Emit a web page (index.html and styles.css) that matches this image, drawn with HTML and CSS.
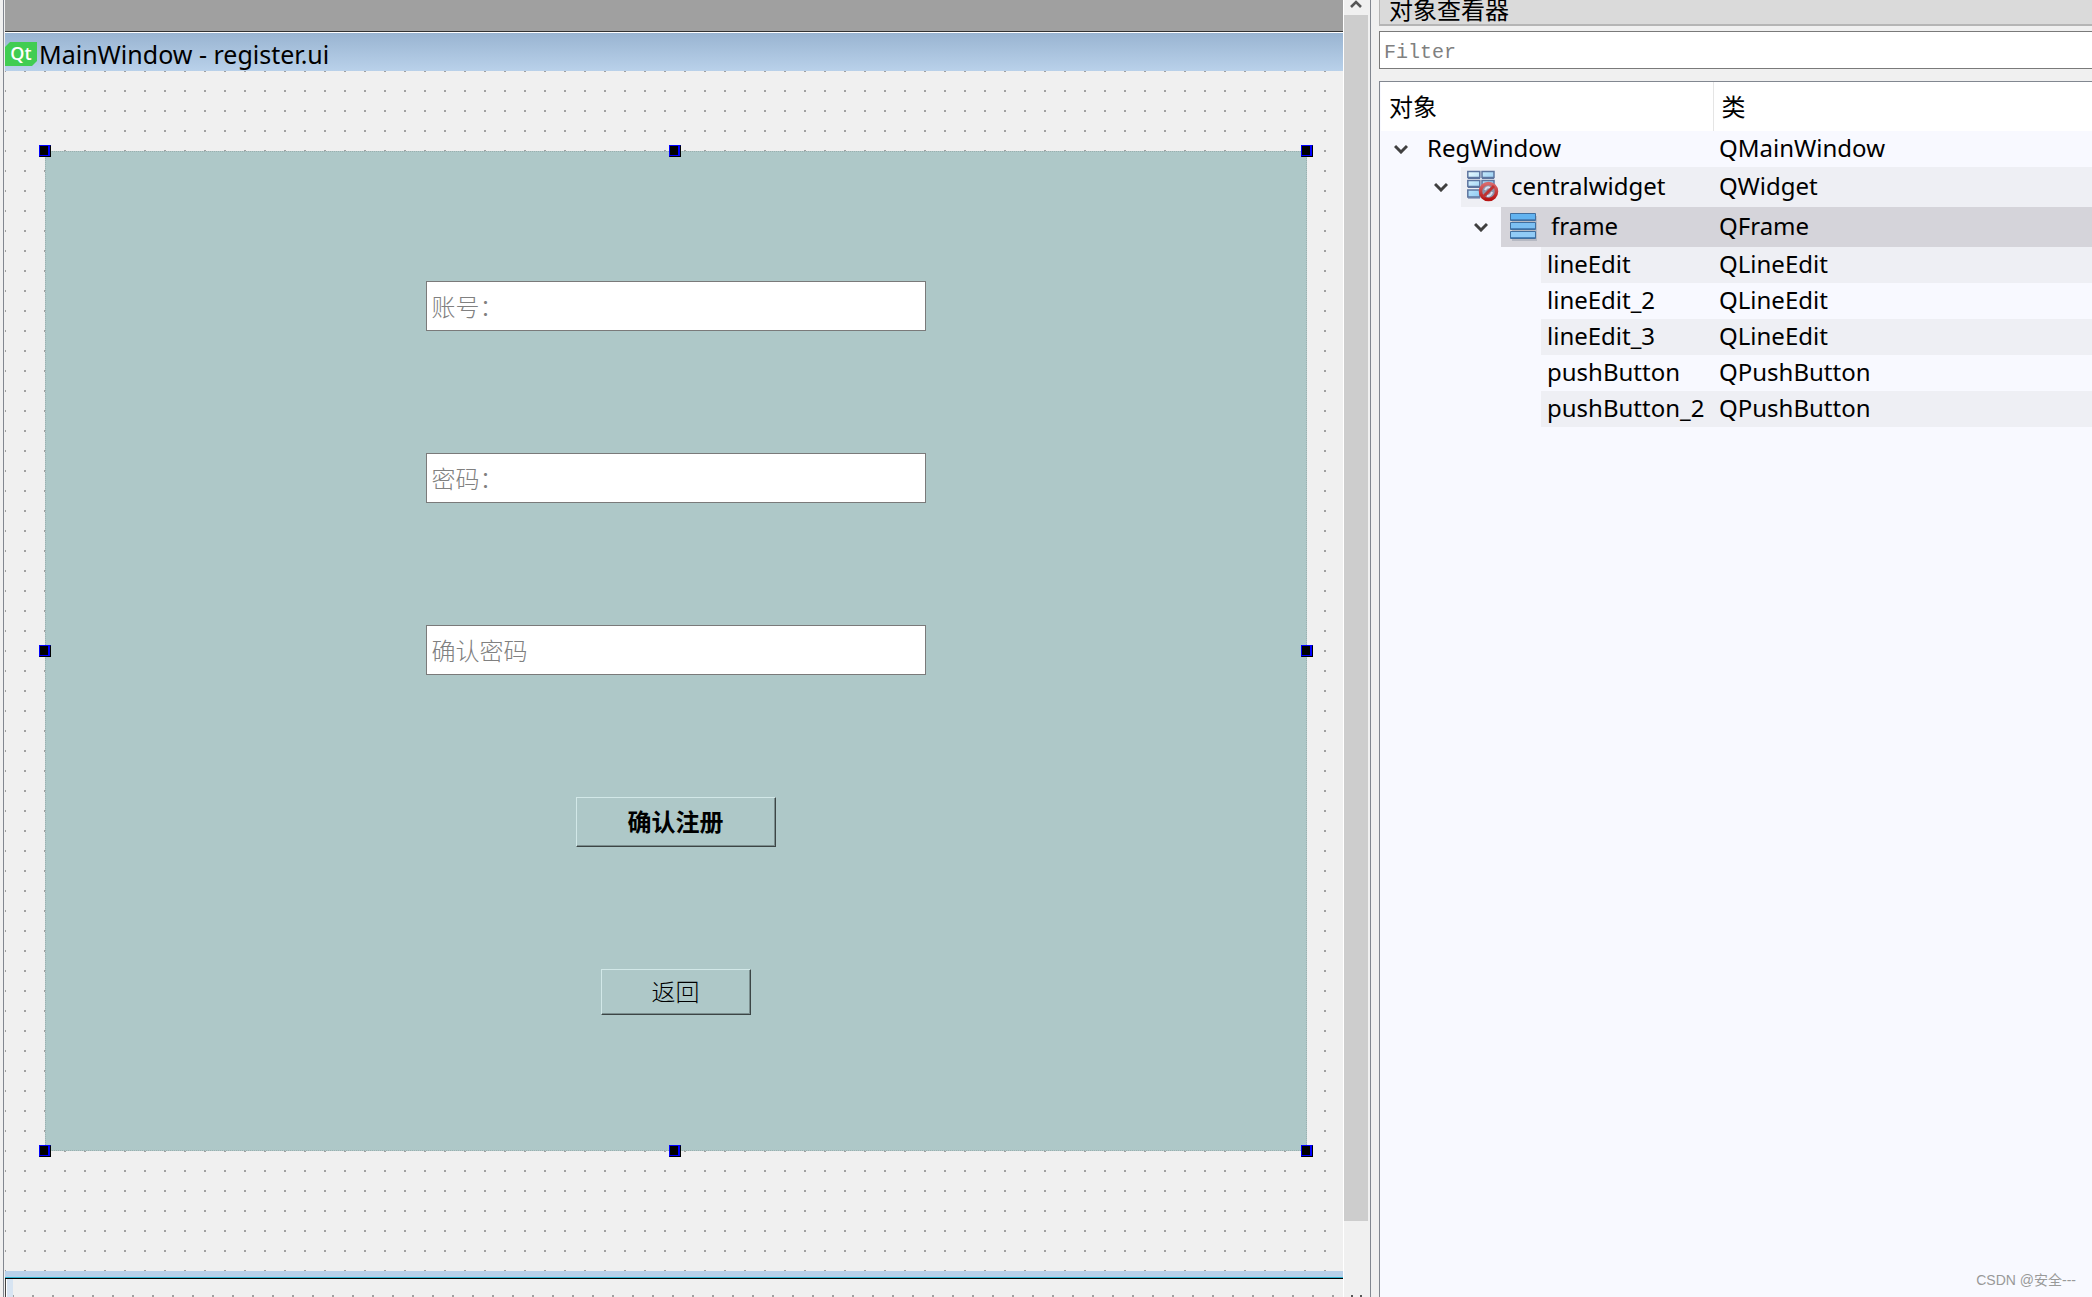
FILE: index.html
```html
<!DOCTYPE html>
<html lang="zh-CN">
<head>
<meta charset="utf-8">
<title>register.ui</title>
<link rel="stylesheet" href="styles.css">
</head>
<body>
<div class="designer">
  <main class="editor">
    <div class="workspace">
      <div class="backdrop"></div>
      <section class="form-window">
        <header class="titlebar">
          <svg class="qt-logo" viewBox="0 0 32 24" aria-hidden="true"><path d="M5 0H32V19L27 24H0V5Z" fill="#41cd52"/><text x="16" y="18" text-anchor="middle">Qt</text></svg>
          <h1 class="title">MainWindow - register.ui</h1>
        </header>
        <div class="canvas">
          <form class="frame">
            <input class="field" type="text" placeholder="账号：" aria-label="账号">
            <input class="field" type="text" placeholder="密码：" aria-label="密码">
            <input class="field" type="text" placeholder="确认密码" aria-label="确认密码">
            <button class="push push-main" type="button">确认注册</button>
            <button class="push push-back" type="button">返回</button>
            <i class="handle top left"></i><i class="handle top center"></i><i class="handle top right"></i>
            <i class="handle middle left"></i><i class="handle middle right"></i>
            <i class="handle bottom left"></i><i class="handle bottom center"></i><i class="handle bottom right"></i>
          </form>
        </div>
        <div class="window-edge"></div>
      </section>
      <div class="next-window"></div>
    </div>
    <div class="scrollbar">
      <svg class="arrow" viewBox="0 0 24 15" aria-hidden="true"><path d="M7 7L12 2L17 7" fill="none" stroke="#555" stroke-width="2.6"/></svg>
      <div class="thumb"></div>
      <svg class="arrow-down" viewBox="0 0 24 2" aria-hidden="true"><path d="M7 0h2v2h-2zM16 0h2v2h-2z" fill="#555"/></svg>
    </div>
  </main>
  <aside class="inspector">
    <h2 class="dock-title">对象查看器</h2>
    <input class="filter" type="text" placeholder="Filter" aria-label="Filter">
    <div class="tree-box">
      <table class="tree">
        <colgroup><col class="col-object"><col></colgroup>
        <thead><tr><th>对象</th><th>类</th></tr></thead>
        <tbody>
          <tr class="depth-0"><td><div class="node"><button class="toggle" type="button" aria-label="RegWindow"><svg viewBox="0 0 14 10"><path d="M1 2L7 8L13 2"/></svg></button><span class="name">RegWindow</span></div></td><td>QMainWindow</td></tr>
          <tr class="depth-1 with-icon shade"><td><div class="node"><button class="toggle" type="button" aria-label="centralwidget"><svg viewBox="0 0 14 10"><path d="M1 2L7 8L13 2"/></svg></button><span class="name">
            <svg class="icon" viewBox="0 0 32 32" aria-hidden="true">
              <defs><linearGradient id="cell" x2="1" y2="1"><stop offset="0" stop-color="#e8fbff"/><stop offset="1" stop-color="#6cb8ee"/></linearGradient><linearGradient id="red" x2="0" y2="1"><stop offset="0" stop-color="#d9696b"/><stop offset="1" stop-color="#b81414"/></linearGradient></defs>
              <g fill="url(#cell)" stroke="#5d759f" stroke-width="1.500"><path d="M.8 1.500h12v6h-12zM15 1.500h12v6h-12zM.8 10.500h12v6h-12zM15 10.500h12v6h-12zM.8 20h12v7h-12z"/><path d="M1 8.500h12M15 8.500h12M1 17.500h12M1 28h12" stroke-width="1"/></g>
              <circle cx="21.500" cy="21.500" r="8" fill="#8b96ad" stroke="url(#red)" stroke-width="3.500"/><path d="M18 20q2-4 5-2M20 26q4 0 5-4" stroke="#dde" stroke-width="2" fill="none"/><path d="M16 27L27 16" stroke="#bd3434" stroke-width="3"/>
            </svg>centralwidget</span></div></td><td>QWidget</td></tr>
          <tr class="depth-2 with-icon selected"><td><div class="node"><button class="toggle" type="button" aria-label="frame"><svg viewBox="0 0 14 10"><path d="M1 2L7 8L13 2"/></svg></button><span class="name">
            <svg class="icon" viewBox="0 0 32 32" aria-hidden="true"><path d="M5 6h25v25h-25z" fill="#b6b9c3"/><g stroke="#416f9f"><path d="M3.500 3.500h25v7h-25z" fill="#62b3f0"/><path d="M3.500 12.500h25v7h-25z" fill="#7cc0f3"/><path d="M3.500 21.500h25v7h-25z" fill="#91cbf6"/></g><path d="M4 9.500h24M4 18.500h24M4 27.500h24" stroke="#4a83ba" stroke-width="1"/></svg>frame</span></div></td><td>QFrame</td></tr>
          <tr class="depth-3 shade"><td><div class="node"><span class="name">lineEdit</span></div></td><td>QLineEdit</td></tr>
          <tr class="depth-3"><td><div class="node"><span class="name">lineEdit_2</span></div></td><td>QLineEdit</td></tr>
          <tr class="depth-3 shade"><td><div class="node"><span class="name">lineEdit_3</span></div></td><td>QLineEdit</td></tr>
          <tr class="depth-3"><td><div class="node"><span class="name">pushButton</span></div></td><td>QPushButton</td></tr>
          <tr class="depth-3 shade"><td><div class="node"><span class="name">pushButton_2</span></div></td><td>QPushButton</td></tr>
        </tbody>
      </table>
      <p class="credit">CSDN @安全---</p>
    </div>
  </aside>
</div>
</body>
</html>
```
FILE: styles.css
```css
* { box-sizing: border-box; }

body {
  margin: 0;
  background: #f0f0f0;
  color: #000;
  font-family: "Noto Sans", "Noto Sans CJK SC", sans-serif;
  font-size: 24px;
}

h1, h2, p { margin: 0; font-weight: 400; }

.designer {
  display: grid;
  grid-template-columns: minmax(0, 1371fr) minmax(0, 721fr);
  grid-template-rows: 100%;
  height: 100vh;
  overflow: hidden;
}

/* Form editor */
.editor {
  display: flex;
  min-width: 0;
  padding-left: 3px;
  border-right: 1px solid #828790;
}

.workspace {
  flex: 1;
  min-width: 0;
  overflow: hidden;
  border-left: 1px solid #828790;
  border-right: 1px solid #fff;
  padding-left: 1px;
}

.backdrop {
  height: 32px;
  background: #a0a0a0;
  border-bottom: 1px solid #333;
}

.titlebar {
  display: flex;
  align-items: center;
  gap: 2px;
  height: 39px;
  padding-top: 4px;
  border-top: 1px solid #fff;
  background: linear-gradient(#99b4d1, #b9d1ea);
}

.qt-logo { width: 32px; height: 24px; }

.qt-logo text {
  fill: #fff;
  font-family: "Open Sans", sans-serif;
  font-size: 18px;
  font-weight: 600;
}

.title { font-size: 25px; line-height: 32px; }

.canvas,
.next-window {
  background-color: #f0f0f0;
  background-image:
    linear-gradient(90deg, transparent 2px, #f0f0f0 2px),
    linear-gradient(#a0a0a0 2px, transparent 2px);
  background-size: 20px 20px;
  background-position: -1px -1px;
}

.canvas { padding: 80px 36px 120px 40px; }

.frame {
  position: relative;
  display: flex;
  flex-direction: column;
  align-items: center;
  gap: 122px;
  padding: 129px 1px 135px 0;
  background: #aec8c8;
  border: 1px dotted #9aafaf;
}

.field {
  width: 500px;
  max-width: 90%;
  height: 50px;
  padding: 0 5px 2px;
  border: 1px solid #7a7a7a;
  background: #fff;
  font: 300 24px "Noto Sans CJK SC", sans-serif;
}

.field::placeholder,
.filter::placeholder { color: #808080; opacity: 1; }

.push {
  padding: 0 0 3px;
  background: #aec8c8;
  border: 1px solid;
  border-color: #d2e8e8 #3c4545 #3c4545 #d2e8e8;
  box-shadow: inset -1px -1px #7b8e8e;
  color: #000;
  font: 300 24px "Noto Sans CJK SC", sans-serif;
}

.push-main { width: 200px; height: 50px; font-weight: 700; }
.push-back { width: 150px; height: 46px; }

/* Resize grips around the selected widget */
.handle {
  position: absolute;
  width: 12px;
  height: 12px;
  background: #000;
  border: 1px solid;
  border-color: #00f #000 #000 #00f;
  box-shadow: inset -2px -1px #00f;
}

.top { top: -7px; }
.middle { top: calc(50% - 6px); }
.bottom { bottom: -7px; }
.left { left: -7px; }
.center { left: calc(50% - 7px); }
.right { right: -7px; }

.window-edge {
  height: 8px;
  background: #b9d1ea;
  border-bottom: 1px solid #000;
  box-shadow: inset 0 -1px #2fb4d0;
}

.next-window {
  height: 200px;
  border-left: 1px solid #444;
  box-shadow: inset 1px 0 #fff, inset 7px 0 #d7e4f2;
  background-position: 6px 16px;
}

.scrollbar {
  display: flex;
  flex-direction: column;
  width: 26px;
  padding-right: 2px;
  background: #f0f0f0;
}

.arrow { width: 24px; height: 15px; }
.thumb { flex: 1; background: #cdcdcd; }
.arrow-down { width: 24px; height: 2px; margin-top: 74px; }

/* Object inspector */
.inspector {
  display: flex;
  flex-direction: column;
  min-width: 0;
  padding-left: 8px;
}

.dock-title {
  height: 26px;
  padding-left: 9px;
  background: #dadada;
  border: solid #b5b5b5;
  border-width: 0 0 2px 1px;
  font-size: 24px;
  line-height: 20px;
}

.filter {
  height: 38px;
  margin: 5px 0 12px;
  padding: 5px 4px 0;
  border: 1px solid #7a7a7a;
  border-right: 0;
  background: #fff;
  font: 20px "Liberation Mono", monospace;
}

.tree-box {
  flex: 1;
  display: flex;
  flex-direction: column;
  justify-content: space-between;
  border: 1px solid #828790;
  border-width: 1px 0 0 1px;
  padding-left: 1px;
  background: #f8f9ff;
}

.tree {
  width: 100%;
  border-collapse: collapse;
  table-layout: fixed;
  line-height: 32px;
}

.col-object { width: 332px; }

th {
  height: 49px;
  padding: 0 8px;
  background: #fff;
  font-weight: 400;
  text-align: left;
}

th:first-child { border-right: 1px solid #e5e5e5; }

td { height: 36px; padding: 0; white-space: nowrap; }
td:last-child { padding: 0 0 2px 6px; }
.with-icon td { height: 40px; }

.node { display: flex; height: 36px; }
.with-icon .node { height: 40px; }

.toggle {
  display: flex;
  align-items: center;
  justify-content: center;
  width: 40px;
  padding: 0;
  border: 0;
  background: none;
}

.toggle svg {
  width: 14px;
  height: 10px;
  fill: none;
  stroke: #404040;
  stroke-width: 3;
}

.name {
  flex: 1;
  display: flex;
  align-items: center;
  gap: 12px;
  padding: 0 0 2px 6px;
}

.icon { width: 32px; height: 32px; }

.depth-1 .node { padding-left: 40px; }
.depth-2 .node { padding-left: 80px; }
.depth-3 .node { padding-left: 160px; }

.shade .name, .shade td:last-child { background: #eeeff4; }
.selected .name, .selected td:last-child { background: #d5d4da; }

.credit {
  padding: 0 16px 6px;
  color: #999;
  font-family: "Liberation Sans", "Noto Sans CJK SC", sans-serif;
  font-size: 14px;
  line-height: 22px;
  text-align: right;
}
```
